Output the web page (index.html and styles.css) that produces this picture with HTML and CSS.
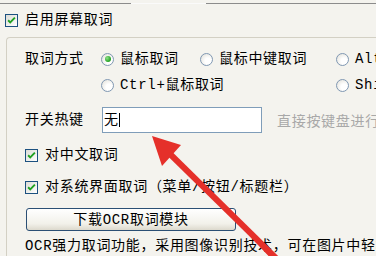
FILE: index.html
```html
<!DOCTYPE html>
<html lang="zh-CN">
<head>
<meta charset="utf-8">
<link rel="stylesheet" href="styles.css">
</head>
<body>
<div class="page">
  <div class="topline"><span class="seg seg-a"></span><span class="seg-gap"></span><span class="seg seg-b"></span></div>

  <div class="row enable">
    <span class="cb"><svg viewBox="0 0 13 13" width="11" height="11"><path d="M2.5 6.2 L5 8.8 L10.5 3" fill="none" stroke="#21a121" stroke-width="2.2"/></svg></span>
    <span class="label">启用屏幕取词</span>
  </div>

  <div class="group">
    <div class="mode-grid">
      <span class="field-label">取词方式</span>
      <span class="opt c2"><span class="radio on"></span><span>鼠标取词</span></span>
      <span class="opt c3"><span class="radio"></span><span>鼠标中键取词</span></span>
      <span class="opt c4"><span class="radio"></span><span>Alt+鼠标取词</span></span>
      <span class="opt c23"><span class="radio"></span><span>Ctrl+鼠标取词</span></span>
      <span class="opt c4"><span class="radio"></span><span>Shift+鼠标取词</span></span>
    </div>

    <div class="hotkey">
      <span class="field-label hk-label">开关热键</span>
      <span class="input"><span>无</span><span class="caret"></span></span>
      <span class="hint">直接按键盘进行设置</span>
    </div>

    <div class="row check first">
      <span class="cb"><svg viewBox="0 0 13 13" width="11" height="11"><path d="M2.5 6.2 L5 8.8 L10.5 3" fill="none" stroke="#21a121" stroke-width="2.2"/></svg></span>
      <span class="label">对中文取词</span>
    </div>
    <div class="row check second">
      <span class="cb"><svg viewBox="0 0 13 13" width="11" height="11"><path d="M2.5 6.2 L5 8.8 L10.5 3" fill="none" stroke="#21a121" stroke-width="2.2"/></svg></span>
      <span class="label">对系统界面取词（菜单/按钮/标题栏）</span>
    </div>

    <div class="btn">下载OCR取词模块</div>

    <div class="desc">OCR强力取词功能，采用图像识别技术，可在图片中轻松取词</div>
  </div>

  <svg class="arrow" width="376" height="256" viewBox="0 0 376 256">
    <path d="M168 150 L176 158 L286 266 L278 266 Z" fill="#e5302a"/>
    <line x1="170" y1="154" x2="282" y2="264" stroke="#e5302a" stroke-width="6"/>
    <polygon points="152,136 181,145 162,166" fill="#e5302a"/>
  </svg>
</div>
</body>
</html>
```

FILE: styles.css
```css
html, body {
  margin: 0;
  padding: 0;
}

body {
  background: #f4f3ee;
  width: 376px;
  height: 256px;
  overflow: hidden;
  font-family: "Liberation Mono", "Noto Sans CJK SC", monospace;
  font-size: 14px;
  letter-spacing: 0.7px;
  color: #000;
}

.page {
  position: relative;
  width: 376px;
  height: 256px;
  overflow: hidden;
}

.topline {
  display: flex;
  margin-top: 3px;
  height: 1px;
}

.seg {
  height: 1px;
  background: #8c8c8c;
}

.seg-a { width: 131px; }
.seg-gap { width: 75px; background: #fafafa; }
.seg-b { flex: 1; }

.row {
  display: flex;
  align-items: center;
  height: 16px;
  line-height: 16px;
}

.enable {
  margin-top: 8px;
  padding-left: 5px;
}

.cb {
  box-sizing: border-box;
  width: 13px;
  height: 13px;
  border: 1px solid #1c5180;
  background: linear-gradient(135deg, #dcdcd6, #ffffff);
  display: flex;
  align-items: center;
  justify-content: center;
  flex: none;
}

.label {
  margin-left: 7px;
  white-space: nowrap;
}

.group {
  margin-top: 9px;
  margin-left: 6px;
  width: 420px;
  height: 240px;
  border-top: 1px solid #d3d0c4;
  border-left: 1px solid #d3d0c4;
  border-top-left-radius: 4px;
  padding-left: 18px;
  padding-top: 8px;
  box-sizing: border-box;
}

.mode-grid {
  display: grid;
  grid-template-columns: 76px 99px 136px 120px;
  grid-auto-rows: 26px;
  align-items: center;
}

.field-label {
  white-space: nowrap;
  line-height: 16px;
}

.opt {
  display: flex;
  align-items: center;
  white-space: nowrap;
  line-height: 16px;
}

.opt .radio + span {
  margin-left: 6px;
}

.c2 { grid-column: 2; grid-row: 1; }
.c3 { grid-column: 3; grid-row: 1; }
.c4 { grid-column: 4; }
.c23 { grid-column: 2 / 4; grid-row: 2; }
.mode-grid .c4:nth-of-type(5) { grid-row: 2; }

.radio {
  box-sizing: border-box;
  width: 13px;
  height: 13px;
  border-radius: 50%;
  border: 1px solid #8098b3;
  background: radial-gradient(circle at 65% 65%, #ffffff 30%, #dedcd4 100%);
  position: relative;
  flex: none;
}

.radio.on::after {
  content: "";
  position: absolute;
  left: 2.5px;
  top: 2.5px;
  width: 6px;
  height: 6px;
  border-radius: 50%;
  background: radial-gradient(circle at 35% 35%, #8fe08a, #21a121 70%);
}

.hotkey {
  display: flex;
  align-items: center;
  margin-top: 9px;
  height: 26px;
}

.hk-label {
  width: 77px;
  flex: none;
}

.input {
  box-sizing: border-box;
  width: 160px;
  height: 26px;
  border: 1px solid #7f9db9;
  background: #fff;
  display: flex;
  align-items: center;
  padding-left: 1px;
  line-height: 16px;
  flex: none;
}

.caret {
  display: inline-block;
  width: 1px;
  height: 14px;
  background: #000;
  margin-left: 0px;
}

.hint {
  margin-left: 15px;
  color: #a8a8a8;
  white-space: nowrap;
}

.check.first {
  margin-top: 14px;
}

.check.second {
  margin-top: 16px;
}

.btn {
  box-sizing: border-box;
  margin-top: 13px;
  margin-left: 1px;
  width: 210px;
  height: 23px;
  border: 1px solid #2b4f74;
  border-radius: 3px;
  background: linear-gradient(#ffffff, #f2f1ea 70%, #dcd9cd);
  display: flex;
  align-items: center;
  justify-content: center;
  line-height: 16px;
  white-space: nowrap;
}

.desc {
  margin-top: 6px;
  line-height: 18px;
  white-space: nowrap;
}

.arrow {
  position: absolute;
  left: 0;
  top: 0;
  pointer-events: none;
}
```
